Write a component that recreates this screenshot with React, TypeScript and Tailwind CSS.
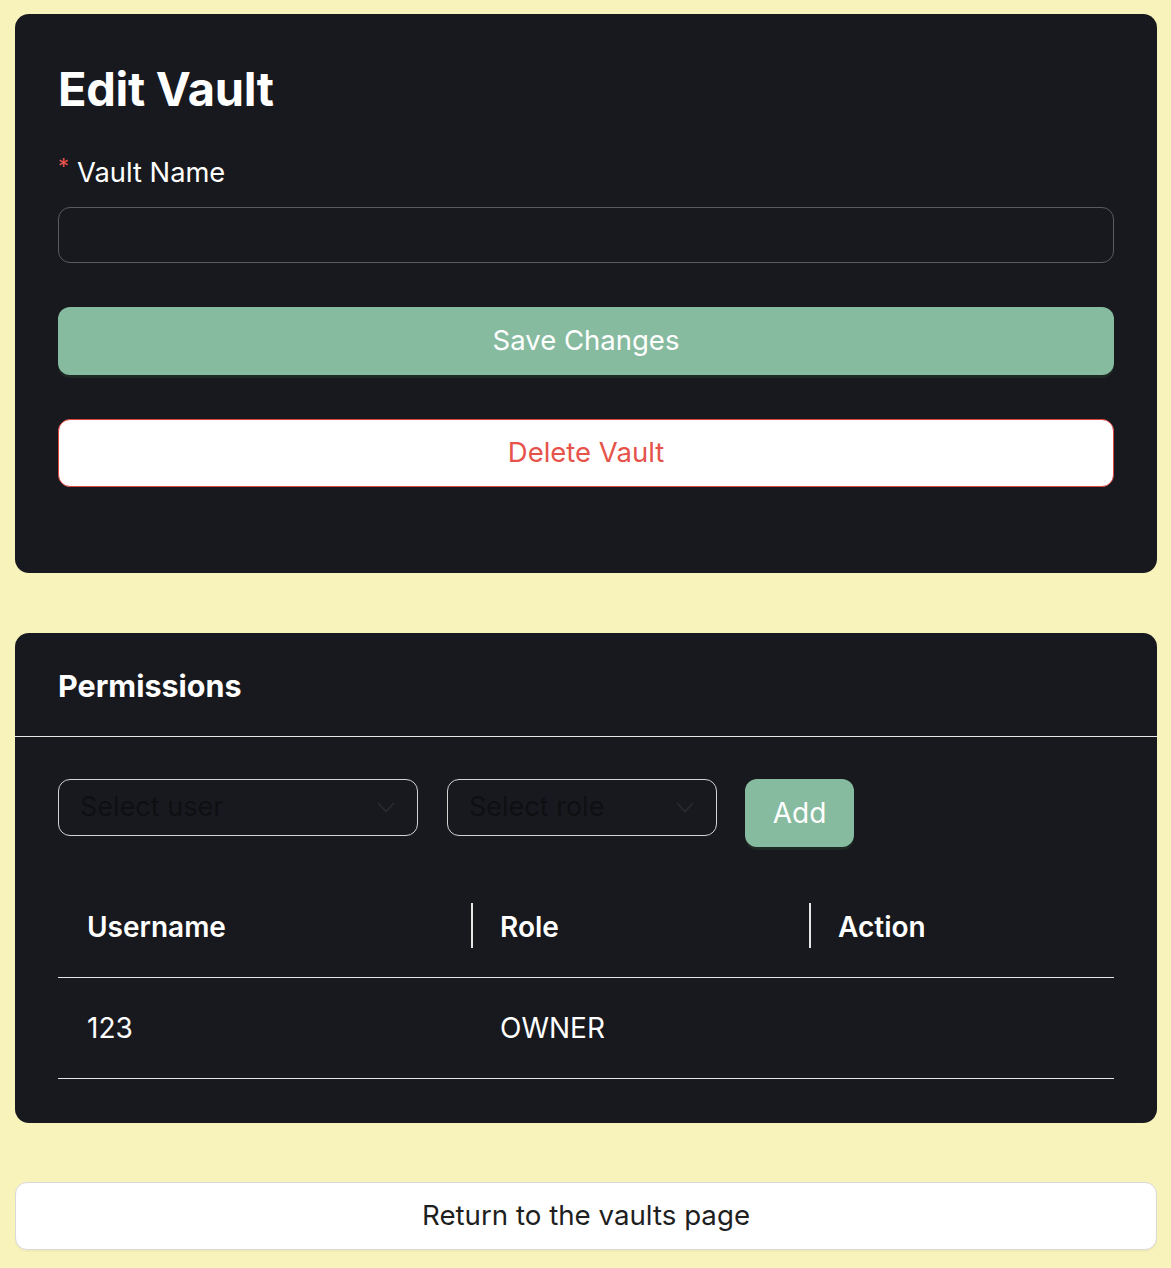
import React from "react";

const Chevron = () => (
  <svg width="18" height="11" viewBox="0 0 18 11" fill="none" className="shrink-0">
    <polyline points="1,1 9,9.5 17,1" stroke="#2a2b2f" strokeWidth="1.6" fill="none" />
  </svg>
);

export default function App() {
  return (
    <div
      className="min-h-[1268px] bg-[#f8f2bb] pt-[14px] pl-[15px] pr-[14px] pb-[19px] flex flex-col"
      style={{ fontFamily: "Inter, 'Noto Sans', sans-serif" }}
    >
      {/* Edit Vault card */}
      <div className="bg-[#18191e] rounded-[14px] pt-[46px] px-[43px] pb-[86px] flex flex-col">
        <h1 className="text-[47px] leading-[58px] font-bold text-white tracking-[-0.3px]">Edit Vault</h1>
        <label className="mt-[35px] text-[27.3px] leading-[39px] text-white flex items-start">
          <span className="text-[#e5534b] text-[22px] leading-[26px] mr-[8px]">*</span>
          Vault Name
        </label>
        <input
          className="mt-[15px] h-[56px] rounded-[12px] border border-[#5b5b5f] bg-transparent outline-none px-4 text-white text-[27px]"
          type="text"
        />
        <button className="mt-[44px] h-[68px] rounded-[12px] bg-[#86bba0] text-white text-[27.5px] shadow-[0_3px_0_#1f2823]">
          Save Changes
        </button>
        <button className="mt-[44px] h-[68px] rounded-[12px] bg-white border border-[#e0443e] text-[#e5534b] text-[27.5px]">
          Delete Vault
        </button>
      </div>

      {/* Permissions card */}
      <div className="mt-[60px] bg-[#18191e] rounded-[14px] flex flex-col">
        <div className="h-[104px] px-[43px] flex items-center border-b border-[#e6e6e6] pt-[2px]">
          <h2 className="text-[30.5px] font-bold text-white">Permissions</h2>
        </div>
        <div className="px-[43px] pt-[42px] pb-[44px] flex flex-col">
          <div className="flex items-start">
            <div className="w-[360px] h-[57px] rounded-[12px] border border-[#d4d4d4] flex items-center justify-between pl-[21px] pr-[22px]">
              <span className="text-[27px] text-[#0e0f12]">Select user</span>
              <Chevron />
            </div>
            <div className="ml-[29px] w-[270px] h-[57px] rounded-[12px] border border-[#d4d4d4] flex items-center justify-between pl-[21px] pr-[22px]">
              <span className="text-[27px] text-[#0e0f12]">Select role</span>
              <Chevron />
            </div>
            <button className="ml-[28px] w-[109px] h-[68px] rounded-[12px] bg-[#86bba0] text-white text-[28px] shadow-[0_3px_0_#1f2823]">
              Add
            </button>
          </div>

          <div className="mt-[30px] flex flex-col text-white">
            <div className="grid grid-cols-[413px_338px_1fr] h-[101px] border-b border-[#e6e6e6]">
              <div className="flex items-center px-[29px] text-[28px] font-semibold">Username</div>
              <div className="relative flex items-center px-[29px] text-[28px] font-semibold">
                <span className="absolute left-0 top-[26px] h-[45px] w-[2px] bg-[#e6e6e6]" />
                Role
              </div>
              <div className="relative flex items-center px-[29px] text-[28px] font-semibold">
                <span className="absolute left-0 top-[26px] h-[45px] w-[2px] bg-[#e6e6e6]" />
                Action
              </div>
            </div>
            <div className="grid grid-cols-[413px_338px_1fr] h-[101px] border-b border-[#e6e6e6]">
              <div className="flex items-center px-[29px] text-[28px]">123</div>
              <div className="flex items-center px-[29px] text-[28px]">OWNER</div>
              <div className="flex items-center px-[29px] text-[28px]"></div>
            </div>
          </div>
        </div>
      </div>

      <button className="mt-[59px] h-[68px] rounded-[12px] bg-white border border-[#d9d9d9] text-[#1f1f1f] text-[27.7px] shadow-[0_2px_0_rgba(0,0,0,0.03)]">
        Return to the vaults page
      </button>
    </div>
  );
}
